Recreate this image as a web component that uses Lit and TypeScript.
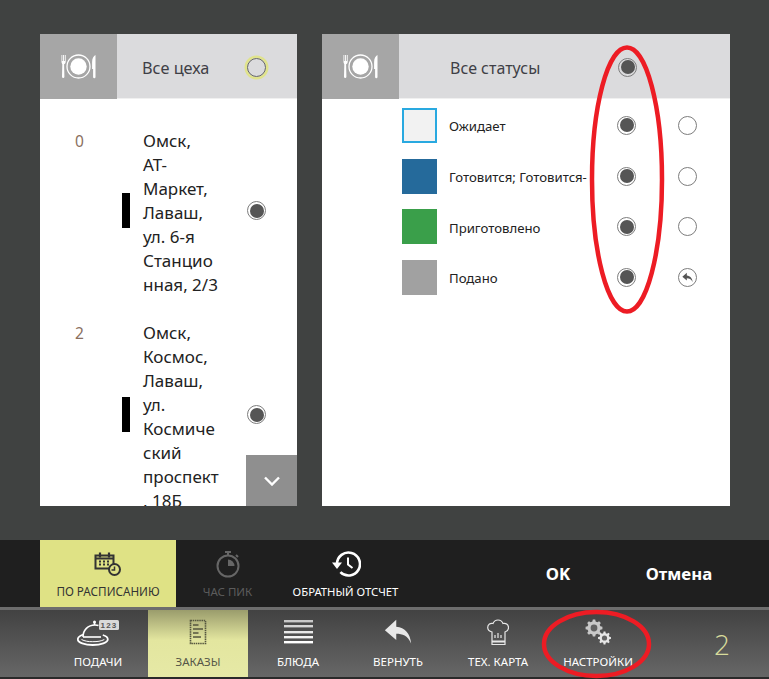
import { LitElement, html, css, svg } from "lit";
import { customElement } from "lit/decorators.js";

const gearPath = (cx: number, cy: number, ro: number, ri: number, teeth: number) => {
  const pts: string[] = [];
  const step = (Math.PI * 2) / teeth;
  for (let i = 0; i < teeth; i++) {
    const a = i * step;
    const list: [number, number][] = [
      [a - step * 0.32, ri],
      [a - step * 0.18, ro],
      [a + step * 0.18, ro],
      [a + step * 0.32, ri],
    ];
    for (const [t, r] of list) pts.push(`${(cx + Math.cos(t) * r).toFixed(2)} ${(cy + Math.sin(t) * r).toFixed(2)}`);
  }
  return "M" + pts.join("L") + "Z";
};

const plateIcon = html`<svg class="plate" width="35" height="25" viewBox="0 0 35 25" fill="#fff">
  <circle cx="17.500" cy="12.500" r="11.500" fill="none" stroke="#fff" stroke-width="1.300"/>
  <circle cx="17.500" cy="12.500" r="8.200"/>
  <path d="M.5 1h.8v6h.8V1h.9v6h.8V1h.9v7c0 1.300-1 1.900-1.600 2.200l.3 12.600a1.200 1.200 0 0 1-2.400 0l.3-12.600C1.400 9.900.5 9.300.5 8z"/>
  <path d="M34.500 1v22a1.200 1.200 0 0 1-2.400 0v-8h-1V8c0-3.500 1.500-6 3.400-7z"/>
</svg>`;

const backArrow = (size: number, color: string) => html`<svg width=${size} height=${size} viewBox="0 0 32 32" fill=${color}>
  <path d="M14 2 1 14l13 11v-7c7 0 13 2 17 11-1-11-7-18-17-19z"/>
</svg>`;

const icons: Record<string, unknown> = {
  cal: html`<svg width="28" height="26" viewBox="0 0 28 26" fill="none" stroke="#333" stroke-width="2">
    <path d="M1.500 4.500h18v13h-18z" stroke-width="2"/>
    <path d="M1 7.500h19" stroke-width="2"/>
    <path d="M6 1.500v5M15 1.500v5" stroke-width="2.200"/>
    <path d="M5 10.500h2M9 10.500h2M13 10.500h2M5 13.500h2M9 13.500h2M13 13.500h2" stroke-width="2"/>
    <circle cx="20.500" cy="18.500" r="5.500" fill="#dfe285"/>
    <path d="M20.500 15.500v3.500h-3" stroke-width="1.500"/>
  </svg>`,
  watch: html`<svg width="26" height="28" viewBox="0 0 26 28" fill="none" stroke="#666" stroke-width="2">
    <circle cx="13" cy="16" r="10.500"/>
    <path d="M10 2h6M13 2v3.500M21 5l2 2" />
    <path d="M13 9.500a6.500 6.500 0 0 1 6.500 6.500h-6.500z" fill="#666" stroke="none"/>
  </svg>`,
  hist: html`<svg width="30" height="28" viewBox="0 0 30 28" fill="none" stroke="#fff" stroke-width="2.600">
    <path d="M6 14a11.500 11.500 0 1 1 3.400 8.200"/>
    <path d="M1 12.500h10L6 19z" fill="#fff" stroke="none"/>
    <path d="M17 7.500v7l4.500 3.500" stroke-width="2"/>
  </svg>`,
  cloche: html`<svg width="42" height="27" viewBox="0 0 42 27" fill="none" stroke="#fff" stroke-width="1.600">
    <path d="M6 18c0-7 5-12 12-12 1.500 0 2.500.2 3.500.6"/>
    <path d="M6 18h18"/>
    <circle cx="17.500" cy="3" r="1.500" fill="#fff" stroke="none"/>
    <path d="M17.500 3v3" />
    <path d="M7 15.500c-4 1-6.200 2.700-6.200 4.800 0 3.400 7 5.700 15 5.700s15-2.300 15-5.700c0-1.600-1.600-3.300-5-4.300" stroke-width="1.800"/>
    <path d="M4.500 20.500c3 1.700 7 2.200 11.300 2.200s8.500-.5 11.500-2.200" stroke-width="1"/>
    <rect x="22" y="1" width="20" height="10" rx="1.500" fill="#d9d9d9" stroke="none"/>
    <text x="32" y="9" text-anchor="middle" font-size="8" font-weight="700" letter-spacing="1.200" fill="#555" stroke="none" font-family="Liberation Sans, sans-serif">123</text>
  </svg>`,
  order: html`<svg width="18" height="26" viewBox="0 0 18 26" fill="none" stroke="#55563f" stroke-width="1.300">
    <path d="M1.500 1.500h15v23h-15z" stroke-dasharray="1.500 .7" stroke-width="1.600"/>
    <path d="M4 6h5.500M4 10h10M4 14h5.500M4 18h8" stroke-width="1.400"/>
  </svg>`,
  dish: html`<svg width="29" height="26" viewBox="0 0 29 26">
    <rect y="1" width="29" height="2.400" fill="#c8c8c8"/>
    <rect y="6" width="29" height="2.400" fill="#d6d6d6"/>
    <rect y="12" width="29" height="2.400" fill="#e8e8e8"/>
    <rect y="17" width="29" height="2.400" fill="#f4f4f4"/>
    <rect y="22" width="29" height="2.400" fill="#fff"/>
  </svg>`,
  chef: html`<svg width="22" height="27" viewBox="0 0 22 27" fill="none" stroke="#e8e8e8" stroke-width="1.200">
    <path d="M5 25.500h13V13c2.500-.8 3.500-2.500 3.500-4.500 0-3-3-4.800-5.500-4C15 2 13 1 11 1S7 2 6 4.500C3.500 3.700 .7 5.500 .7 8.500c0 2 1 3.700 4.300 4.500z"/>
    <path d="M5 22.500h13" stroke-width="2"/>
    <path d="M8 19v-3M11 19v-5M14 19v-3"/>
  </svg>`,
  gears: html`<svg width="26" height="26" viewBox="0 0 26 26" fill="none">
    ${svg`<path d=${gearPath(9, 9, 8.5, 6.6, 8)} stroke="none" fill="#c8c8c8"/><circle cx="9" cy="9" r="3.400" fill="#626262"/>`}
    ${svg`<path d=${gearPath(19.5, 19, 6.5, 5, 8)} stroke="none" fill="#e6e6e6"/><circle cx="19.500" cy="19" r="2.600" fill="#646464"/>`}
  </svg>`,
};

const shops = [
  { n: "0", lines: ["Омск,", "АТ-", "Маркет,", "Лаваш,", "ул. 6-я", "Станцио", "нная, 2/3"] },
  { n: "2", lines: ["Омск,", "Космос,", "Лаваш,", "ул.", "Космиче", "ский", "проспект", ", 18Б"] },
];

const statuses = [
  { name: "Ожидает", cls: "waiting", undo: false },
  { name: "Готовится; Готовится-", cls: "cooking", undo: false },
  { name: "Приготовлено", cls: "ready", undo: false },
  { name: "Подано", cls: "served", undo: true },
];

const tabs = [
  { label: "ПОДАЧИ", icon: "cloche" },
  { label: "ЗАКАЗЫ", icon: "order", active: true },
  { label: "БЛЮДА", icon: "dish" },
  { label: "ВЕРНУТЬ", icon: "back" },
  { label: "ТЕХ. КАРТА", icon: "chef" },
  { label: "НАСТРОЙКИ", icon: "gears" },
];

@customElement("app-root")
export class AppRoot extends LitElement {
  static styles = css`
    :host {
      display: block;
      position: relative;
      width: 769px;
      height: 679px;
      overflow: hidden;
      background: #404241;
      font-family: "Noto Sans", "Open Sans", sans-serif;
    }
    .page { display: flex; flex-direction: column; height: 679px; }
    .main { display: flex; gap: 25px; padding: 34px 39px 0 40px; height: 472px; }
    .panel { background: #fff; height: 472px; position: relative; overflow: hidden; }
    .left { width: 257px; }
    .right { width: 408px; }
    .head { display: flex; align-items: center; height: 65px; background: #dbdbdd; border-bottom: 1px solid #f0f0f0; box-sizing: border-box; }
    .head-icon { width: 77px; height: 65px; background: #a6a6a6; display: flex; align-items: center; justify-content: center; flex: none; }
    .head-icon svg { margin-top: 1px; }
    .left .head-title { margin-left: 25px; width: 105px; font-size: 16.300px; }
    .right .head-title { margin-left: 51px; width: 168px; }
    .head-title { font-size: 16px; color: #3f3f46; margin-top: 4px; }
    .radio { width: 19px; height: 19px; border-radius: 50%; box-sizing: border-box; border: 1.500px solid #7d7d7d; background: #fff; flex: none; display: flex; align-items: center; justify-content: center; }
    .radio.on::after { content: ""; width: 14px; height: 14px; border-radius: 50%; background: #555; }
    .head .radio { margin-top: 2px; }
    .head .radio.on { background: transparent; }
    .radio.focus { background: transparent; border-color: #666; box-shadow: 0 0 0 2.500px #e0e38c; }
    .list { padding: 30px 0 0; display: flex; flex-direction: column; gap: 24px; }
    .shop { display: flex; align-items: center; position: relative; }
    .num { position: absolute; left: 35px; top: 0; line-height: 24px; font-size: 15.500px; color: #8a6f5e; }
    .bar { width: 8px; height: 35px; background: #000; margin: 0 0 5px 82px; flex: none; }
    .addr { margin-left: 13px; width: 97px; font-size: 17px; line-height: 24px; color: #222; white-space: nowrap; flex: none; }
    .shop .radio { margin: 0 0 5px 7px; }
    .more { position: absolute; right: 0; bottom: 0; width: 51px; height: 51px; background: #8f8f8f; display: flex; align-items: center; justify-content: center; }
    .rows { display: flex; flex-direction: column; padding-top: 1px; }
    .row { display: flex; align-items: center; height: 50.700px; }
    .sw { width: 35px; height: 35px; margin-left: 80px; box-sizing: border-box; flex: none; }
    .waiting { background: #f2f2f2; border: 2px solid #29a9e0; }
    .cooking { background: #256a9b; }
    .ready { background: #3a9f4a; }
    .served { background: #a1a1a1; }
    .name { margin-left: 12px; width: 168px; font-size: 13.200px; color: #222; white-space: nowrap; flex: none; padding-top: 2px; }
    .row .r2 { margin-left: 42px; }
    .undo { display: flex; align-items: center; justify-content: center; }
    .actions { margin-top: 34px; height: 67px; background: #1f1f1f; display: flex; padding-left: 40px; }
    .act { width: 136px; height: 67px; display: flex; flex-direction: column; align-items: center; justify-content: flex-end; gap: 6px; padding-bottom: 8px; box-sizing: border-box; font-size: 11.500px; color: #fff; white-space: nowrap; flex: none; }
    .act svg { display: block; }
    .act.sel { background: #dfe285; color: #333; font-size: 11.700px; }
    .act.off { color: #5c5c5c; width: 103px; }
    .act.plain { width: 125px; margin-left: 4px; font-size: 11.300px; }
    .cmd { font-size: 16.800px; font-weight: 700; color: #fff; align-self: center; text-align: center; flex: none; }
    .cmd.ok { width: 60px; margin-left: 120px; }
    .cmd.cancel { width: 90px; margin-left: 46px; }
    .tabs { margin-top: 3px; height: 67px; background: linear-gradient(#424242, #676767); display: flex; padding-left: 48px; position: relative; }
    .tab { width: 100px; height: 67px; display: flex; flex-direction: column; align-items: center; box-sizing: border-box; font-size: 11.500px; color: #fff; flex: none; position: relative; }
    .tab .ic { height: 44px; display: flex; align-items: center; justify-content: center; }
    .tab .lbl { line-height: 16px; white-space: nowrap; }
    .tab.sel { background: linear-gradient(#9a9c6c, #e3e69f 45%, #e6e9a6); color: #565748; }
    .count { margin-left: 66px; width: 30px; text-align: left; font-size: 28px; font-weight: 300; color: #d8dc9c; align-self: center; font-family: "Open Sans", sans-serif; }
    .strip { height: 2px; background: #2a2a2a; }
    .sep { height: 3px; background: #6d6d6d; margin-top: -3px; position: relative; top: 3px; }
    .marks { position: absolute; left: 0; top: 0; pointer-events: none; }
  `;

  render() {
    return html`<div class="page">
      <div class="main">
        <section class="panel left">
          <div class="head">
            <div class="head-icon">${plateIcon}</div>
            <div class="head-title">Все цеха</div>
            <div class="radio focus"></div>
          </div>
          <div class="list">
            ${shops.map(
              (s) => html`<div class="shop">
                <span class="num">${s.n}</span>
                <span class="bar"></span>
                <div class="addr">${s.lines.map((l) => html`${l}<br />`)}</div>
                <span class="radio on"></span>
              </div>`
            )}
          </div>
          <div class="more">
            <svg width="18" height="10" viewBox="0 0 18 10" fill="none" stroke="#fff" stroke-width="2.400"><path d="M2 1.500l7 7 7-7"/></svg>
          </div>
        </section>
        <section class="panel right">
          <div class="head">
            <div class="head-icon">${plateIcon}</div>
            <div class="head-title">Все статусы</div>
            <div class="radio on"></div>
          </div>
          <div class="rows">
            ${statuses.map(
              (s) => html`<div class="row">
                <div class="sw ${s.cls}"></div>
                <div class="name">${s.name}</div>
                <span class="radio on"></span>
                ${s.undo
                  ? html`<span class="radio r2 undo">${backArrow(11, "#555")}</span>`
                  : html`<span class="radio r2"></span>`}
              </div>`
            )}
          </div>
        </section>
      </div>
      <div class="actions">
        <div class="act sel">${icons.cal}<span>ПО РАСПИСАНИЮ</span></div>
        <div class="act off">${icons.watch}<span>ЧАС ПИК</span></div>
        <div class="act plain">${icons.hist}<span>ОБРАТНЫЙ ОТСЧЕТ</span></div>
        <div class="cmd ok">OK</div>
        <div class="cmd cancel">Отмена</div>
      </div>
      <div class="sep"></div>
      <div class="tabs">
        ${tabs.map(
          (t) => html`<div class="tab ${t.active ? "sel" : ""}">
            <div class="ic">${t.icon === "back" ? backArrow(28, "#e8e8e8") : icons[t.icon]}</div>
            <div class="lbl">${t.label}</div>
          </div>`
        )}
        <div class="count">2</div>
      </div>
      <div class="strip"></div>
    </div>
    <svg class="marks" width="769" height="679" fill="none" stroke="#ed1c24" stroke-width="4.500">
      <ellipse cx="627" cy="179.500" rx="35" ry="132"/>
      <ellipse cx="596.500" cy="644" rx="52.500" ry="32"/>
    </svg>`;
  }
}
